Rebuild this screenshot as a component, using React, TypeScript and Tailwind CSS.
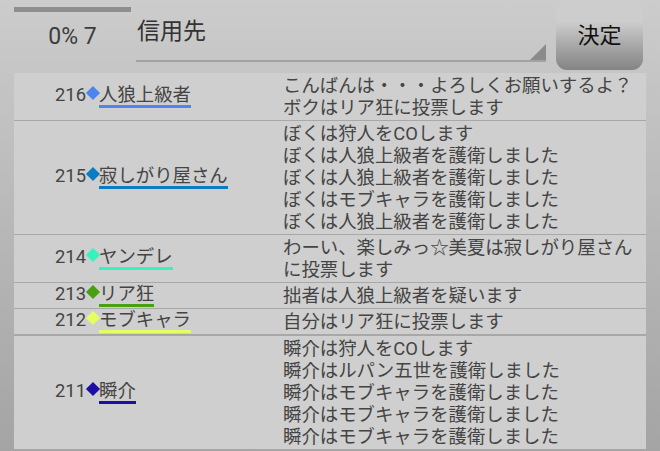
import React from 'react';

// one log entry: number, speaker, their colour and what they said
interface LogRow {
  no: number;
  name: string;
  color: string;
  lines: string[];
  thick?: boolean;
}

const rows: LogRow[] = [
  {
    no: 216,
    name: '人狼上級者',
    color: '#4d84f0',
    lines: ['こんばんは・・・よろしくお願いするよ？', 'ボクはリア狂に投票します'],
  },
  {
    no: 215,
    name: '寂しがり屋さん',
    color: '#0c7cc2',
    lines: [
      'ぼくは狩人をCOします',
      'ぼくは人狼上級者を護衛しました',
      'ぼくは人狼上級者を護衛しました',
      'ぼくはモブキャラを護衛しました',
      'ぼくは人狼上級者を護衛しました',
    ],
  },
  {
    no: 214,
    name: 'ヤンデレ',
    color: '#36f2bc',
    lines: ['わーい、楽しみっ☆美夏は寂しがり屋さん', 'に投票します'],
  },
  { no: 213, name: 'リア狂', color: '#48a010', lines: ['拙者は人狼上級者を疑います'] },
  { no: 212, name: 'モブキャラ', color: '#e6ff60', lines: ['自分はリア狂に投票します'], thick: true },
  {
    no: 211,
    name: '瞬介',
    color: '#1c0ea2',
    lines: [
      '瞬介は狩人をCOします',
      '瞬介はルパン五世を護衛しました',
      '瞬介はモブキャラを護衛しました',
      '瞬介はモブキャラを護衛しました',
      '瞬介はモブキャラを護衛しました',
    ],
  },
];

const App: React.FC = () => {
  return (
    <div className="w-full h-[451px] overflow-hidden bg-linear-to-b from-[#cccccc] to-[#a4a4a4] font-['Roboto','Noto_Sans_CJK_JP',sans-serif] text-[#444]">
      {/* Header */}
      <div className="flex h-[73px] pl-[14px] pr-[17px]">
        <div className="w-[117px] flex flex-col">
          <div className="mt-[7px] h-[5px] bg-[#8e8e8e]" />
          <div className="flex-1 flex items-center justify-center pb-[10px] text-[23px] text-[#3c3c3c]">0% 7</div>
        </div>
        <div className="ml-[5px] w-[410px] h-[62px] relative border-b-[2px] border-[#a2a2a2] flex items-center">
          <span className="pl-[1px] pt-[4px] text-[23px] text-[#333]">信用先</span>
          {/* spinner corner */}
          <svg className="absolute right-0 bottom-0" width="16" height="16" viewBox="0 0 16 16">
            <polygon points="0,16 16,16 16,0" fill="#8b8b8b" />
          </svg>
        </div>
        <div className="ml-[10px] mt-[1px] w-[87px] h-[69px] rounded-[11px] bg-linear-to-b from-[#cdcdcd] from-30% to-[#848484] flex items-center justify-center text-[22px] text-[#111]">
          決定
        </div>
      </div>

      {/* Log table */}
      <div className="mx-[14px] bg-[#cfcfcf]">
        {rows.map((r) => (
          <div
            key={r.no}
            className={`flex py-[1.5px] border-[#a8a8a8] ${r.thick ? 'border-b-2' : 'border-b'}`}
          >
            <div className="w-[269px] pl-[41px] flex items-center">
              <div className="whitespace-nowrap text-[18.4px] leading-[18px]">
                {r.no}
                <span
                  className="inline-block w-[10px] h-[10px] rotate-45 ml-[2px] mr-[1px] align-[3px]"
                  style={{ backgroundColor: r.color }}
                />
                <span
                  className="inline-block border-b-[3px] leading-[17px] pb-[2px]"
                  style={{ borderColor: r.color }}
                >
                  {r.name}
                </span>
              </div>
            </div>
            <div className="flex-1 text-[18.4px] leading-[22px] whitespace-nowrap">
              {r.lines.map((l, i) => (
                <div key={i}>{l}</div>
              ))}
            </div>
          </div>
        ))}
      </div>
    </div>
  );
};

export default App;
